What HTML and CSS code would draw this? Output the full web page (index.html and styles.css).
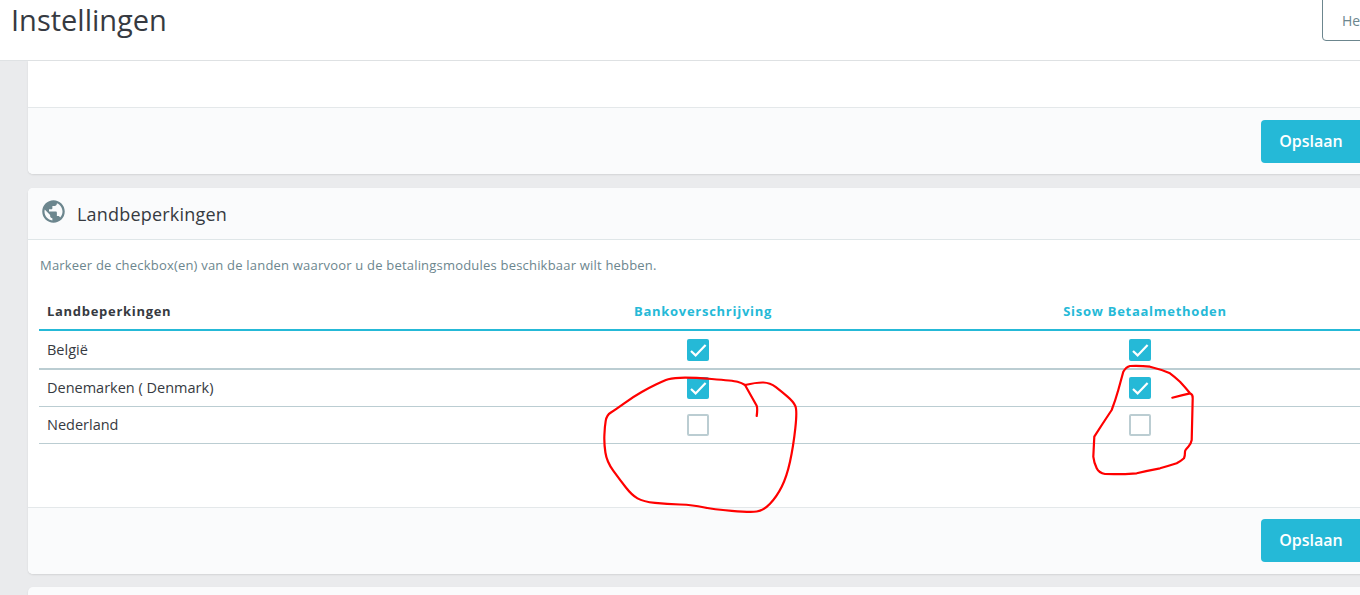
FILE: index.html
```html
<!DOCTYPE html>
<html lang="nl">
<head>
<meta charset="utf-8">
<title>Instellingen</title>
<link rel="stylesheet" href="styles.css">
</head>
<body>
<header class="page-head">
  <h1 class="page-title">Instellingen</h1>
  <a class="help-btn">Help</a>
</header>
<main class="content">
  <section class="card card-first">
    <div class="card-body-empty"></div>
    <div class="card-foot"><button class="save">Opslaan</button></div>
  </section>
  <section class="card card-main">
    <div class="card-head">
      <svg class="globe" viewBox="0 0 24 24"><path d="M12 2C6.48 2 2 6.48 2 12s4.48 10 10 10 10-4.48 10-10S17.52 2 12 2zm-1 17.93c-3.95-.49-7-3.85-7-7.93 0-.62.08-1.21.21-1.79L9 15v1c0 1.1.9 2 2 2v1.93zm6.9-2.54c-.26-.81-1-1.39-1.9-1.39h-1v-3c0-.55-.45-1-1-1H8v-2h2c.55 0 1-.45 1-1V7h2c1.1 0 2-.9 2-2v-.41c2.93 1.19 5 4.06 5 7.41 0 2.08-.8 3.97-2.1 5.39z"/></svg>
      <h2 class="card-title">Landbeperkingen</h2>
    </div>
    <div class="card-body">
      <p class="hint">Markeer de checkbox(en) van de landen waarvoor u de betalingsmodules beschikbaar wilt hebben.</p>
      <div class="matrix">
        <div class="row row-head">
          <div class="cell-name th">Landbeperkingen</div>
          <div class="cell-mod th-mod">Bankoverschrijving</div>
          <div class="cell-mod th-mod">Sisow Betaalmethoden</div>
        </div>
        <div class="row row-thick">
          <div class="cell-name">België</div>
          <div class="cell-mod"><span class="cb on"><svg viewBox="0 0 22 22"><path d="M4 12l4.6 4.4L18.6 6"/></svg></span></div>
          <div class="cell-mod"><span class="cb on"><svg viewBox="0 0 22 22"><path d="M4 12l4.6 4.4L18.6 6"/></svg></span></div>
        </div>
        <div class="row">
          <div class="cell-name cell-name-up">Denemarken ( Denmark)</div>
          <div class="cell-mod"><span class="cb on"><svg viewBox="0 0 22 22"><path d="M4 12l4.6 4.4L18.6 6"/></svg></span></div>
          <div class="cell-mod"><span class="cb on"><svg viewBox="0 0 22 22"><path d="M4 12l4.6 4.4L18.6 6"/></svg></span></div>
        </div>
        <div class="row">
          <div class="cell-name cell-name-up">Nederland</div>
          <div class="cell-mod"><span class="cb"></span></div>
          <div class="cell-mod"><span class="cb"></span></div>
        </div>
      </div>
    </div>
    <div class="card-foot card-foot-main"><button class="save">Opslaan</button></div>
  </section>
  <section class="card card-next"></section>
</main>
<svg class="ink" viewBox="0 0 1360 595" aria-hidden="true">
  <path d="M756.7 416Q757.7 408.3 756.7 405.8L745 385Q741.7 382.7 737.5 381.7Q733.3 380.7 711.7 379Q690 377.3 680 377.8Q670 378.3 665.9 380Q661.7 381.7 655.9 384.5Q650 387.3 641.7 392Q633.3 396.7 624.2 403.4Q615 410 610.9 412.5Q606.7 415 605.7 420.9Q604.7 426.7 604.4 435Q604 443.3 605.4 452.5Q606.7 461.7 613.4 470.9Q620 480 625.9 487.5Q631.7 495 637.5 498.4Q643.3 501.7 655 502.9Q666.7 504 680 504.5Q693.3 505 703.3 507.2Q713.3 509.3 731.7 510.8Q750 512.3 756.7 511.5Q763.3 510.7 770 503.7Q776.7 496.7 781.7 486.7Q786.7 476.7 790 461.7Q793.3 446.7 795.3 428.4Q797.3 410 795.3 405.9Q793.3 401.7 787.5 396.7Q781.7 391.7 775.9 387.2Q770 382.7 763.4 382.5Q756.7 382.3 745 385"/>
  <path d="M1172.3 397.7Q1182 395 1190 393.3Q1193 394.5 1192.7 398.3L1191.7 440Q1191 444 1188.3 446.7Q1185 450 1185 451.7Q1185 456 1184 458.3Q1181 461 1176.7 463.3Q1170 465.5 1160 468.3Q1148 470.5 1136.7 473.3Q1120 474.5 1105 474Q1099 473 1096.7 468.3Q1094 463 1093.3 456.7L1094.3 436.7Q1103 423 1111.7 410Q1115.5 400 1118.3 390L1123.3 371.7Q1126 367 1130 366Q1140 365.5 1150 366.7Q1160 369 1170 373.3Q1175 377 1180 381.7Q1185 387 1190 393.3"/>
</svg>
</body>
</html>
```
FILE: styles.css
```css
html, body { margin: 0; height: 595px; overflow: hidden; }
body { background: #eaebed; font-family: "Open Sans", sans-serif; color: #363a41; position: relative; }
.page-head { height: 60px; background: #fff; border-bottom: 1px solid #dfe2e4; display: flex; justify-content: space-between; align-items: flex-start; width: 1421px; }
.page-title { margin: 2px 0 0 11px; font-size: 29px; font-weight: 400; line-height: 36px; color: #363a41; }
.help-btn { margin: -10px 20px 0 0; height: 49px; width: 58px; border: 1px solid #6c868e; border-radius: 4px; color: #6c868e; font-size: 14px; padding: 0 0 0 19px; line-height: 59px; background: #fff; }
.content { margin-left: 28px; width: 1349px; height: 534px; display: flex; flex-direction: column; gap: 13px; }
.card { background: #fff; border-radius: 5px; box-shadow: 0 1px 2px rgba(0,0,0,.1); flex: none; }
.card-first { border-radius: 0 0 5px 5px; margin-bottom: 1px; }
.card-body-empty { height: 46px; }
.card-foot { height: 67px; border-top: 1px solid #e4e8ea; background: #fafbfc; border-radius: 0 0 5px 5px; display: flex; justify-content: flex-end; align-items: flex-start; padding: 12px 11px 0 0; box-sizing: border-box; }
.card-foot-main { padding-top: 11px; }
.save { width: 105px; height: 43px; border: 0; border-radius: 4px; background: #25b9d7; color: #fff; font: 600 16px "Open Sans", sans-serif; padding: 0 5px 2px 0; }
.card-head { height: 51px; background: #fafbfc; border-bottom: 1px solid #dfe6e8; border-radius: 5px 5px 0 0; display: flex; align-items: flex-start; padding-left: 12px; }
.globe { width: 27px; height: 27px; fill: #6c868e; margin-top: 10px; }
.card-title { margin: 14px 0 0 10px; font-size: 18px; font-weight: 500; letter-spacing: .2px; line-height: 24px; color: #363a41; }
.card-body { height: 267px; padding: 0 0 0 11px; }
.hint { margin: 0 0 0 1px; padding-top: 17px; font-size: 13px; letter-spacing: .2px; line-height: 16px; color: #6c868e; }
.matrix { margin-top: 19px; width: 1327px; }
.row { display: grid; grid-template-columns: 443px 442px 442px; height: 37px; border-bottom: 1px solid #bbcdd2; box-sizing: border-box; align-items: center; }
.row-head { height: 39px; border-bottom: 2px solid #25b9d7; }
.row-thick { height: 39px; border-bottom: 2px solid #bbcdd2; }
.cell-name { padding-left: 8px; font-size: 14.5px; color: #363a41; }
.cell-name-up { padding-bottom: 2px; }
.th { font-size: 13px; font-weight: 700; letter-spacing: .7px; }
.cell-mod { text-align: center; }
.th-mod { font-size: 13px; font-weight: 700; letter-spacing: .73px; color: #25b9d7; }
.cb { display: block; width: 22px; height: 22px; box-sizing: border-box; margin-left: 205px; border: 2px solid #bbcdd2; border-radius: 2px; background: #fff; }
.cb.on { background: #25b9d7; border: 0; }
.cb svg { display: block; width: 22px; height: 22px; fill: none; stroke: #fff; stroke-width: 2.2; }
.card-next { height: 60px; background: #fafbfc; }
.ink { position: absolute; left: 0; top: 0; width: 1360px; height: 595px; pointer-events: none; fill: none; stroke: #f00; stroke-width: 2.2; stroke-linejoin: round; stroke-linecap: round; }
```
